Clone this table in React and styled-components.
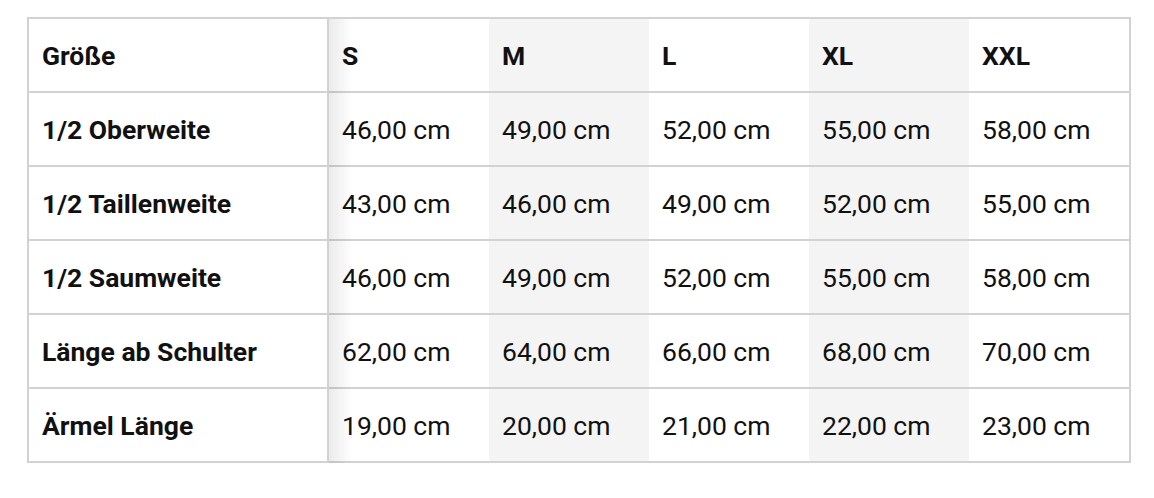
import styled, { createGlobalStyle } from "styled-components";

const GlobalStyle = createGlobalStyle`
    *, *::before, *::after {
        box-sizing: border-box;
    }
    body {
        margin: 0;
        background: #ffffff;
        font-family: Roboto, "Liberation Sans", sans-serif;
        color: #111111;
    }
`

const sizes = ["S", "M", "L", "XL", "XXL"]

const rows = [
    { label: "1/2 Oberweite", values: [46, 49, 52, 55, 58] },
    { label: "1/2 Taillenweite", values: [43, 46, 49, 52, 55] },
    { label: "1/2 Saumweite", values: [46, 49, 52, 55, 58] },
    { label: "Länge ab Schulter", values: [62, 64, 66, 68, 70] },
    { label: "Ärmel Länge", values: [19, 20, 21, 22, 23] },
]

const format = (n) => `${n},00 cm`

export default function App() {
    return (
        <>
            <GlobalStyle />
            <Page>
                <Table>
                    <thead>
                        <tr>
                            <LabelCell as="th">Größe</LabelCell>
                            {sizes.map((size, index) => (
                                <Cell as="th" key={size} $shaded={index % 2 === 1} $bold>
                                    {size}
                                </Cell>
                            ))}
                        </tr>
                    </thead>
                    <tbody>
                        {rows.map((row) => (
                            <tr key={row.label}>
                                <LabelCell>{row.label}</LabelCell>
                                {row.values.map((value, index) => (
                                    <Cell key={index} $shaded={index % 2 === 1}>
                                        {format(value)}
                                    </Cell>
                                ))}
                            </tr>
                        ))}
                    </tbody>
                </Table>
            </Page>
        </>
    )
}

const Page = styled.div`
    padding: 17px 24px 0 27px;
    height: 498px;
`

const Table = styled.table`
    width: 1103px;
    table-layout: fixed;
    border-collapse: separate;
    border-spacing: 0;
    border: 2px solid #d2d2d2;

    tr:last-child td {
        border-bottom: none;
        height: 72px;
    }
`

const Cell = styled.td`
    width: 160px;
    height: 74px;
    padding: 0 13px;
    border-bottom: 2px solid #d2d2d2;
    background: ${(p) => (p.$shaded ? "#f4f4f4" : "#ffffff")};
    font-size: 26.5px;
    font-weight: ${(p) => (p.$bold ? 700 : 400)};
    text-align: left;
    vertical-align: middle;
    white-space: nowrap;
`

const LabelCell = styled.td`
    position: relative;
    width: 300px;
    height: 74px;
    padding: 0 13px;
    border-bottom: 2px solid #d2d2d2;
    border-right: 2px solid #d2d2d2;
    font-size: 26.5px;
    font-weight: 700;
    text-align: left;
    vertical-align: middle;
    white-space: nowrap;

    &::after {
        content: "";
        position: absolute;
        top: 0;
        bottom: -2px;
        right: -26px;
        width: 24px;
        background: linear-gradient(to right, rgba(0, 0, 0, 0.08), rgba(0, 0, 0, 0));
        pointer-events: none;
        z-index: 1;
    }
`
